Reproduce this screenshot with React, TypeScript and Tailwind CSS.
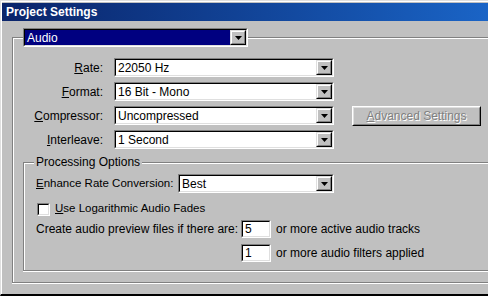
import React from "react";

function Arrow() {
  return (
    <div className="h-full w-[16px] shrink-0 border border-t-[#dfdfdf] border-l-[#dfdfdf] border-b-black border-r-black">
      <div className="flex h-full w-full items-center justify-center border border-t-white border-l-white border-b-[#808080] border-r-[#808080] bg-[#c0c0c0]">
        <svg width="7" height="4" viewBox="0 0 7 4" className="block">
          <polygon points="0,0 7,0 3.5,4" fill="#000" />
        </svg>
      </div>
    </div>
  );
}

function Sunken({ className, children }: { className: string; children?: React.ReactNode }) {
  return (
    <div className={`shrink-0 border border-t-[#808080] border-l-[#808080] border-b-white border-r-white ${className}`}>
      <div className="flex h-full w-full border border-t-black border-l-black border-b-[#dfdfdf] border-r-[#dfdfdf] bg-white">
        {children}
      </div>
    </div>
  );
}

function Combo({ value, className, selected }: { value: string; className: string; selected?: boolean }) {
  return (
    <Sunken className={className}>
      <div
        className={`flex flex-1 items-center pl-[2px] leading-none ${selected ? "bg-[#000080] text-white" : "text-black"}`}
      >
        {value}
      </div>
      <Arrow />
    </Sunken>
  );
}

function Label({ pre, u, post, className }: { pre?: string; u: string; post: string; className?: string }) {
  return (
    <span className={`whitespace-nowrap ${className ?? ""}`}>
      {pre}
      <span className="underline underline-offset-[1px]">{u}</span>
      {post}
    </span>
  );
}

export default function App() {
  const rows: { u: string; post: string; value: string }[] = [
    { u: "R", post: "ate:", value: "22050 Hz" },
    { u: "F", post: "ormat:", value: "16 Bit - Mono" },
    { u: "C", post: "ompressor:", value: "Uncompressed" },
    { u: "I", post: "nterleave:", value: "1 Second" },
  ];
  return (
    <div className="flex h-[296px] w-[488px] flex-col overflow-hidden border-b-2 border-l border-t border-b-black border-l-[#dfdfdf] border-t-[#dfdfdf] bg-[#c0c0c0] font-['Liberation_Sans',Arial,sans-serif] text-[12px] text-black">
      <div className="flex flex-1 flex-col border-l border-t border-l-white border-t-white">
        <div className="mt-[1px] flex h-[18px] items-center bg-gradient-to-r from-[#0a246a] to-[#1a64c6] pl-[4px] text-[12px] font-bold text-white">
          Project Settings
        </div>
        <div className="mb-[11px] ml-[10px] mr-[-10px] mt-[16px] flex flex-1 flex-col border-b border-l border-t border-[#808080] shadow-[inset_1px_1px_0_#fff,0_1px_0_#fff]">
          <div className="relative -mt-[10px] ml-[10px] w-fit">
            <Combo value="Audio" className="h-[19px] w-[225px]" selected />
          </div>
          <div className="mt-[11px] flex flex-col gap-[5px]">
            {rows.map((r, i) => (
              <div key={r.value} className="flex h-[19px] items-center">
                <Label u={r.u} post={r.post} className="w-[90px] text-right" />
                <Combo value={r.value} className="ml-[11px] h-[19px] w-[220px]" />
                {i === 2 && (
                  <div className="ml-[18px] h-[20px] w-[129px] border border-t-white border-l-white border-b-black border-r-black">
                    <div className="flex h-full w-full items-center justify-center border border-t-[#dfdfdf] border-l-[#dfdfdf] border-b-[#808080] border-r-[#808080] text-[#808080] [text-shadow:1px_1px_0_#fff]">
                      <Label u="A" post="dvanced Settings" />
                    </div>
                  </div>
                )}
              </div>
            ))}
          </div>
          <div className="ml-[10px] mr-[-10px] mt-[13px] flex flex-col border-b border-l border-t border-[#808080] pb-[8px] shadow-[inset_1px_1px_0_#fff,0_1px_0_#fff]">
            <div className="relative -mt-[8px] ml-[10px] w-fit bg-[#c0c0c0] px-[2px] leading-[14px]">Processing Options</div>
            <div className="mt-[5px] flex h-[19px] items-center pl-[12px]">
              <Label u="E" post="nhance Rate Conversion:" className="w-[142px] shrink-0 text-[11.5px]" />
              <Combo value="Best" className="h-[19px] w-[156px]" />
            </div>
            <div className="mt-[7px] flex h-[18px] items-center pl-[13px]">
              <Sunken className="h-[13px] w-[13px]" />
              <Label u="U" post="se Logarithmic Audio Fades" className="ml-[5px] text-[11.5px]" />
            </div>
            <div className="mt-[2px] grid grid-cols-[205px_30px_1fr] items-center gap-y-[6px] pl-[12px]">
              <span className="whitespace-nowrap">Create audio preview files if there are:</span>
              <Sunken className="h-[18px] w-[30px]">
                <span className="flex items-center pl-[2px] leading-none">5</span>
              </Sunken>
              <span className="ml-[5px] whitespace-nowrap">or more active audio tracks</span>
              <span />
              <Sunken className="h-[18px] w-[30px]">
                <span className="flex items-center pl-[2px] leading-none">1</span>
              </Sunken>
              <span className="ml-[5px] whitespace-nowrap">or more audio filters applied</span>
            </div>
          </div>
        </div>
      </div>
    </div>
  );
}
